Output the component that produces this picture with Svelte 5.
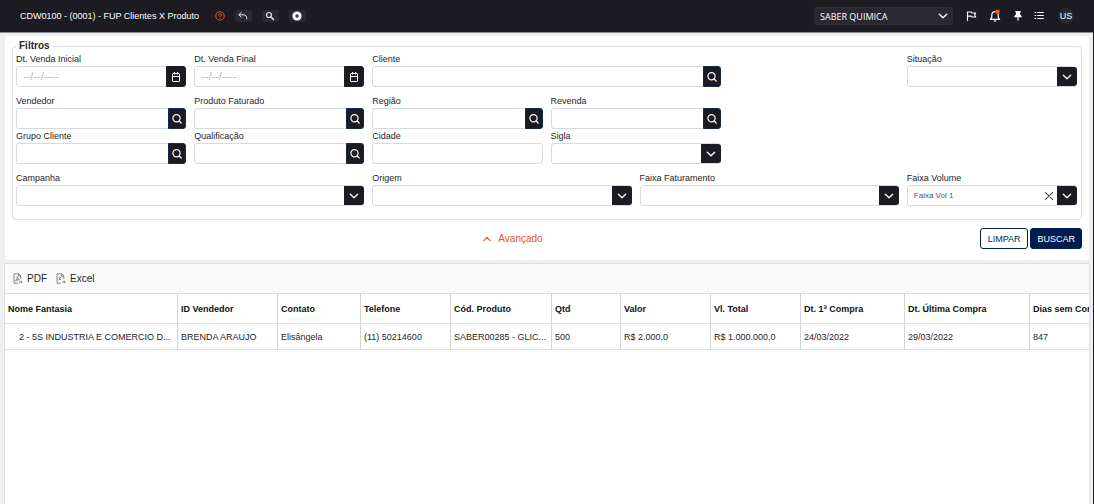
<script>
  const fields = [
    [
      { id: 'dt-ini', label: 'Dt. Venda Inicial', type: 'date', span: 2 },
      { id: 'dt-fim', label: 'Dt. Venda Final', type: 'date', span: 2 },
      { id: 'cliente', label: 'Cliente', type: 'search', span: 4 },
      { id: 'situacao', label: 'Situação', type: 'select', span: 2, start: 11 }
    ],
    [
      { id: 'vendedor', label: 'Vendedor', type: 'search', span: 2 },
      { id: 'produto', label: 'Produto Faturado', type: 'search', span: 2 },
      { id: 'regiao', label: 'Região', type: 'search', span: 2 },
      { id: 'revenda', label: 'Revenda', type: 'search', span: 2 }
    ],
    [
      { id: 'grupo', label: 'Grupo Cliente', type: 'search', span: 2 },
      { id: 'qualificacao', label: 'Qualificação', type: 'search', span: 2 },
      { id: 'cidade', label: 'Cidade', type: 'text', span: 2 },
      { id: 'sigla', label: 'Sigla', type: 'select', span: 2 }
    ],
    [
      { id: 'campanha', label: 'Campanha', type: 'select', span: 4 },
      { id: 'origem', label: 'Origem', type: 'select', span: 3 },
      { id: 'faturamento', label: 'Faixa Faturamento', type: 'select', span: 3 },
      { id: 'volume', label: 'Faixa Volume', type: 'select', span: 2, value: 'Faixa Vol 1' }
    ]
  ];

  const columns = [
    { title: 'Nome Fantasia', width: 173, value: '2 - 5S INDUSTRIA E COMERCIO D...' },
    { title: 'ID Vendedor', width: 100, value: 'BRENDA ARAUJO' },
    { title: 'Contato', width: 83, value: 'Elisângela' },
    { title: 'Telefone', width: 90, value: '(11) 50214600' },
    { title: 'Cód. Produto', width: 101, value: 'SABER00285 - GLIC...' },
    { title: 'Qtd', width: 69, value: '500' },
    { title: 'Valor', width: 90, value: 'R$ 2.000,0' },
    { title: 'Vl. Total', width: 90, value: 'R$ 1.000.000,0' },
    { title: 'Dt. 1ª Compra', width: 104, value: '24/03/2022' },
    { title: 'Dt. Última Compra', width: 125, value: '29/03/2022' },
    { title: 'Dias sem Compra', width: 110, value: '847' }
  ];
</script>

{#snippet magnifier()}
  <svg width="12" height="12" viewBox="0 0 12 12" fill="none" stroke="currentColor" stroke-width="1.2" stroke-linecap="round" aria-hidden="true">
    <circle cx="5.5" cy="5.3" r="3.6" /><path d="M8.2 8 10.2 10" />
  </svg>
{/snippet}

{#snippet chevron()}
  <svg width="10" height="10" viewBox="0 0 10 10" fill="none" stroke="currentColor" stroke-width="1.3" stroke-linecap="round" stroke-linejoin="round" aria-hidden="true">
    <path d="M1.3 3.2 5 6.8 8.7 3.2" />
  </svg>
{/snippet}

<div class="page">
  <header>
    <h1>CDW0100 - (0001) - FUP Clientes X Produto</h1>
    <div class="tools">
      <button class="plain help" aria-label="Ajuda">
        <svg width="10" height="10" viewBox="0 0 10 10" fill="none" stroke="currentColor" stroke-width="1.1" stroke-linecap="round">
          <circle cx="5" cy="5" r="4.2" /><path d="M3.7 4a1.3 1.3 0 1 1 2 1.1c-.5.3-.7.5-.7.9M5 7.4v.1" />
        </svg>
      </button>
      <button class="tool" aria-label="Voltar">
        <svg width="10" height="10" viewBox="0 0 10 10" fill="none" stroke="currentColor" stroke-width="1" stroke-linecap="round" stroke-linejoin="round">
          <path d="M3.3 1.5.9 3.8l2.4 2.3M1.1 3.8h4.6q3 0 3.1 4" />
        </svg>
      </button>
      <button class="tool" aria-label="Pesquisar">
        <svg width="10" height="10" viewBox="0 0 10 10" fill="none" stroke="currentColor" stroke-linecap="round">
          <circle cx="4" cy="4" r="2.5" stroke-width="1.2" /><path d="M6 6 8.4 8.4" stroke-width="1.5" />
        </svg>
      </button>
      <button class="tool" aria-label="Adicionar">
        <svg width="10" height="10" viewBox="0 0 10 10">
          <circle cx="5" cy="5" r="4.6" fill="#fff" /><path d="M5 3v4M3 5h4" stroke="#1c1b22" stroke-width="1.2" />
        </svg>
      </button>
    </div>
    <div class="company">
      <select aria-label="Empresa"><option>SABER QUIMICA</option></select>
      <span class="chev">{@render chevron()}</span>
    </div>
    <nav>
      <button class="plain" aria-label="Sinalizar">
        <svg width="12" height="12" viewBox="0 0 12 12" fill="none" stroke="currentColor" stroke-width="1.1" stroke-linejoin="round">
          <path d="M2.500 11V2h3.800l.7 1h3.700L9.600 5l1.100 2H7l-.7-.9H2.500" />
        </svg>
      </button>
      <button class="plain" aria-label="Notificações">
        <svg width="14" height="14" viewBox="0 0 14 14" fill="none" stroke="currentColor" stroke-width="1.2" stroke-linejoin="round">
          <path d="M7 2.600C4.800 2.600 3.800 4.200 3.800 6v2.300L2.400 10.400h9.200l-1.400-2.100V6C10.200 4.200 9.200 2.600 7 2.600Z" /><path d="M5.800 12h2.400" />
          <circle cx="9.600" cy="2.800" r="2.300" fill="#f4511e" stroke="none" />
        </svg>
      </button>
      <button class="plain" aria-label="Fixar">
        <svg width="10" height="12" viewBox="0 0 10 12" fill="currentColor">
          <path d="M2.200 1h5.600v1.300H7l.3 2.500L8.700 6v1.300H5.600V10L5 11.300 4.400 10V7.300H1.300V6l1.400-1.200.3-2.500h-.8Z" />
        </svg>
      </button>
      <button class="plain" aria-label="Menu">
        <svg width="10" height="10" viewBox="0 0 10 10" stroke="currentColor" stroke-width="1.200">
          <path d="M0.500 1.500h1.700M3.200 1.500h6.600M0.500 4.500h1.700M3.200 4.500h6.600M0.500 7.500h1.700M3.200 7.500h6.600" />
        </svg>
      </button>
      <button class="avatar" aria-label="Usuário">US</button>
    </nav>
  </header>

  <main>
    <form class="card" onsubmit={(e) => e.preventDefault()}>
      <fieldset>
        <legend>Filtros</legend>
        {#each fields as row, i}
          <div class="row" class:spaced={i === 0 || i === 2}>
            {#each row as f}
              <div class="field span{f.span}" class:last={f.start}>
                <label for={f.id}>{f.label}</label>
                {#if f.type === 'select'}
                  <div class="combo">
                    <select id={f.id}><option>{f.value ?? ''}</option></select>
                    {#if f.value}
                      <button type="button" class="clear" aria-label="Limpar {f.label}">
                        <svg width="10" height="10" viewBox="0 0 10 10" stroke="currentColor" stroke-width="1.100" stroke-linecap="round"><path d="M1.300 1.300 8.700 8.700M8.700 1.300 1.300 8.700" /></svg>
                      </button>
                    {/if}
                    <span class="arrow">{@render chevron()}</span>
                  </div>
                {:else}
                  <div class="box">
                    <input id={f.id} type="text" placeholder={f.type === 'date' ? '--/--/----' : null} />
                    {#if f.type === 'date'}
                      <button type="button" class="end date" aria-label="Abrir calendário">
                        <svg width="10" height="12" viewBox="0 0 10 12" fill="none" stroke="currentColor" stroke-width="1" stroke-linejoin="round">
                          <rect x="1.500" y="2.500" width="7" height="8" rx="0.600" /><path d="M1.500 5.500h7M3.500 1v2.500M6.500 1v2.500" />
                        </svg>
                      </button>
                    {:else if f.type === 'search'}
                      <button type="button" class="end" aria-label="Buscar {f.label}">{@render magnifier()}</button>
                    {/if}
                  </div>
                {/if}
              </div>
            {/each}
          </div>
        {/each}
      </fieldset>
      <div class="actions">
        <button type="button" class="advanced">
          <svg width="8" height="8" viewBox="0 0 8 8" fill="none" stroke="currentColor" stroke-width="1.200" stroke-linecap="round" stroke-linejoin="round"><path d="M0.800 5.600 4 2.400 7.200 5.600" /></svg>
          Avançado
        </button>
        <div class="buttons">
          <button type="reset" class="btn">LIMPAR</button>
          <button type="submit" class="btn primary">BUSCAR</button>
        </div>
      </div>
    </form>

    <section class="grid">
      <div class="toolbar">
        <button>
          <svg width="10" height="11" viewBox="0 0 10 11" fill="none" stroke="currentColor" stroke-width="0.900" stroke-linejoin="round">
            <path d="M7.800 6V3L5.800.800H1v9.400h4M5.600.900v2.300h2.200" /><path d="M2.500 8C4 6.500 4.300 5 4.200 3.700 4.600 5.500 5.400 6.500 6.600 6.800 5 6.600 3.500 7 2.500 8M6 9h3M7.800 7.800 9.200 9 7.800 10.200" />
          </svg>
          PDF
        </button>
        <button>
          <svg width="10" height="11" viewBox="0 0 10 11" fill="none" stroke="currentColor" stroke-width="0.900" stroke-linejoin="round">
            <path d="M7.800 6V3L5.800.800H1v9.400h4M5.600.900v2.300h2.200" /><path d="M2.600 4 5 7.400M5 4 2.600 7.400M6 9h3M7.800 7.800 9.200 9 7.800 10.200" />
          </svg>
          Excel
        </button>
      </div>
      <div class="scroller">
        <table>
          <colgroup>
            {#each columns as c}<col style="width: {c.width}px" />{/each}
          </colgroup>
          <thead>
            <tr>{#each columns as c}<th scope="col">{c.title}</th>{/each}</tr>
          </thead>
          <tbody>
            <tr>{#each columns as c}<td>{c.value}</td>{/each}</tr>
          </tbody>
        </table>
      </div>
    </section>
  </main>
</div>

<style>
  :global(body) {
    font-family: 'Liberation Sans', Arial, sans-serif;
    font-size: 9px;
    color: #26262b;
  }
  .page, .page * { box-sizing: border-box; }
  .page {
    display: flex;
    flex-direction: column;
    min-height: 100vh;
    background: #efefef;
    border-right: 1px solid #1c1b22;
  }
  button, input, select { font: inherit; color: inherit; margin: 0; }
  button {
    display: inline-flex;
    align-items: center;
    justify-content: center;
    padding: 0;
    border: 0;
    background: none;
  }
  svg { display: block; flex: none; }

  header {
    display: flex;
    align-items: center;
    height: 33px;
    padding: 0 19px 0 20px;
    background: #1c1b22;
    border-bottom: 1px solid #8b8b8e;
    color: #fff;
  }
  h1 { margin: 0; font-size: 9px; font-weight: 400; }
  .tools { display: flex; align-items: center; gap: 10px; margin-left: 16px; }
  .help { color: #e8431c; }
  .tool {
    width: 17px;
    height: 12px;
    border-radius: 2px;
    background: #2a2932;
    color: #e6e6e8;
  }
  .company {
    display: grid;
    align-items: center;
    width: 139px;
    height: 18px;
    margin-left: auto;
    border-radius: 2px;
    background: #2a2932;
    font-family: 'Open Sans', sans-serif;
  }
  .company > * { grid-area: 1 / 1; }
  .company select {
    height: 100%;
    padding: 0 20px 0 6px;
    appearance: none;
    border: 0;
    background: none;
  }
  .chev { justify-self: end; padding-right: 5px; pointer-events: none; }
  nav { display: flex; align-items: center; gap: 11px; margin-left: 12px; }
  .avatar {
    width: 16px;
    height: 16px;
    margin-left: 3px;
    border-radius: 50%;
    background: #2a2932;
  }

  main {
    flex: 1;
    display: flex;
    flex-direction: column;
    gap: 3px;
    padding: 3px 3px 0 4px;
  }
  .card {
    margin: 0 1px;
    padding: 4px 7px 11px;
    border-radius: 3px;
    background: #fff;
  }
  fieldset {
    min-width: 0;
    margin: 0;
    padding: 0 4px 13px 3px;
    border: 1px solid #dcdde0;
    border-radius: 4px;
  }
  legend {
    padding: 0 3px;
    font-size: 10px;
    line-height: 12px;
    font-weight: 700;
  }
  .row {
    display: grid;
    grid-template-columns: repeat(12, minmax(0, 1fr));
    column-gap: 8px;
  }
  .spaced { padding-bottom: 7px; }
  .span2 { grid-column: span 2; }
  .span3 { grid-column: span 3; }
  .span4 { grid-column: span 4; }
  .last { grid-column: 11 / span 2; }
  label { display: block; line-height: 14px; }
  .box, .combo {
    height: 21px;
    border: 1px solid #d3dae2;
    border-radius: 3px;
    background: #fff;
  }
  .box { display: flex; }
  .box input {
    flex: 1;
    min-width: 0;
    padding: 0 6px;
    border: 0;
    background: none;
    outline: 0;
  }
  .box input::placeholder { color: #b4b6bb; font-size: 11px; }
  .end {
    width: 18px;
    margin: -1px;
    border: 1px solid #14264d;
    border-radius: 0 3px 3px 0;
    background: #1c1b22;
    color: #fff;
  }
  .date { width: 20px; border-color: #1c1b22; }
  .combo { display: grid; align-items: center; }
  .combo > * { grid-area: 1 / 1; }
  .combo select {
    width: 100%;
    height: 100%;
    padding: 0 34px 0 6px;
    appearance: none;
    border: 0;
    background: none;
    color: #55565c;
    font-size: 8px;
  }
  .arrow {
    display: flex;
    align-items: center;
    justify-content: center;
    justify-self: end;
    width: 20px;
    height: 100%;
    margin-right: -1px;
    border-radius: 0 3px 3px 0;
    background: #1c1b22;
    color: #fff;
    pointer-events: none;
  }
  .clear { justify-self: end; margin-right: 22px; color: #4a4b50; }

  .actions {
    display: grid;
    grid-template-columns: 1fr auto 1fr;
    align-items: center;
    padding-top: 8px;
  }
  .advanced { grid-column: 2; gap: 7px; margin-right: 68px; color: #e8532a; font-size: 10px; }
  .buttons { display: flex; justify-content: flex-end; gap: 2px; }
  .btn {
    height: 21px;
    padding: 0 7px;
    border: 1px solid #001d52;
    border-radius: 3px;
    color: #001d52;
  }
  .primary { padding: 0 6px; background: #001d52; color: #fff; }

  .grid {
    flex: 1;
    min-width: 0;
    border: 1px solid #dfdfdf;
    border-bottom: 0;
    background: #fff;
  }
  .toolbar {
    display: flex;
    gap: 9px;
    height: 30px;
    padding: 0 8px;
    border-bottom: 1px solid #dfdfdf;
    background: #fafafa;
  }
  .toolbar button { gap: 4px; font-size: 10px; }
  .toolbar svg { color: #77787c; }
  .scroller { overflow: hidden; }
  table {
    width: 1135px;
    table-layout: fixed;
    border-collapse: separate;
    border-spacing: 0;
  }
  th, td {
    padding: 0 0 0 3px;
    overflow: hidden;
    border-right: 1px solid #d4d4d4;
    border-bottom: 1px solid #e2e2e2;
    text-align: left;
    text-overflow: ellipsis;
    white-space: nowrap;
  }
  th { height: 30px; color: #111; }
  td { height: 26px; }
  td:first-child { padding-left: 14px; }
</style>
